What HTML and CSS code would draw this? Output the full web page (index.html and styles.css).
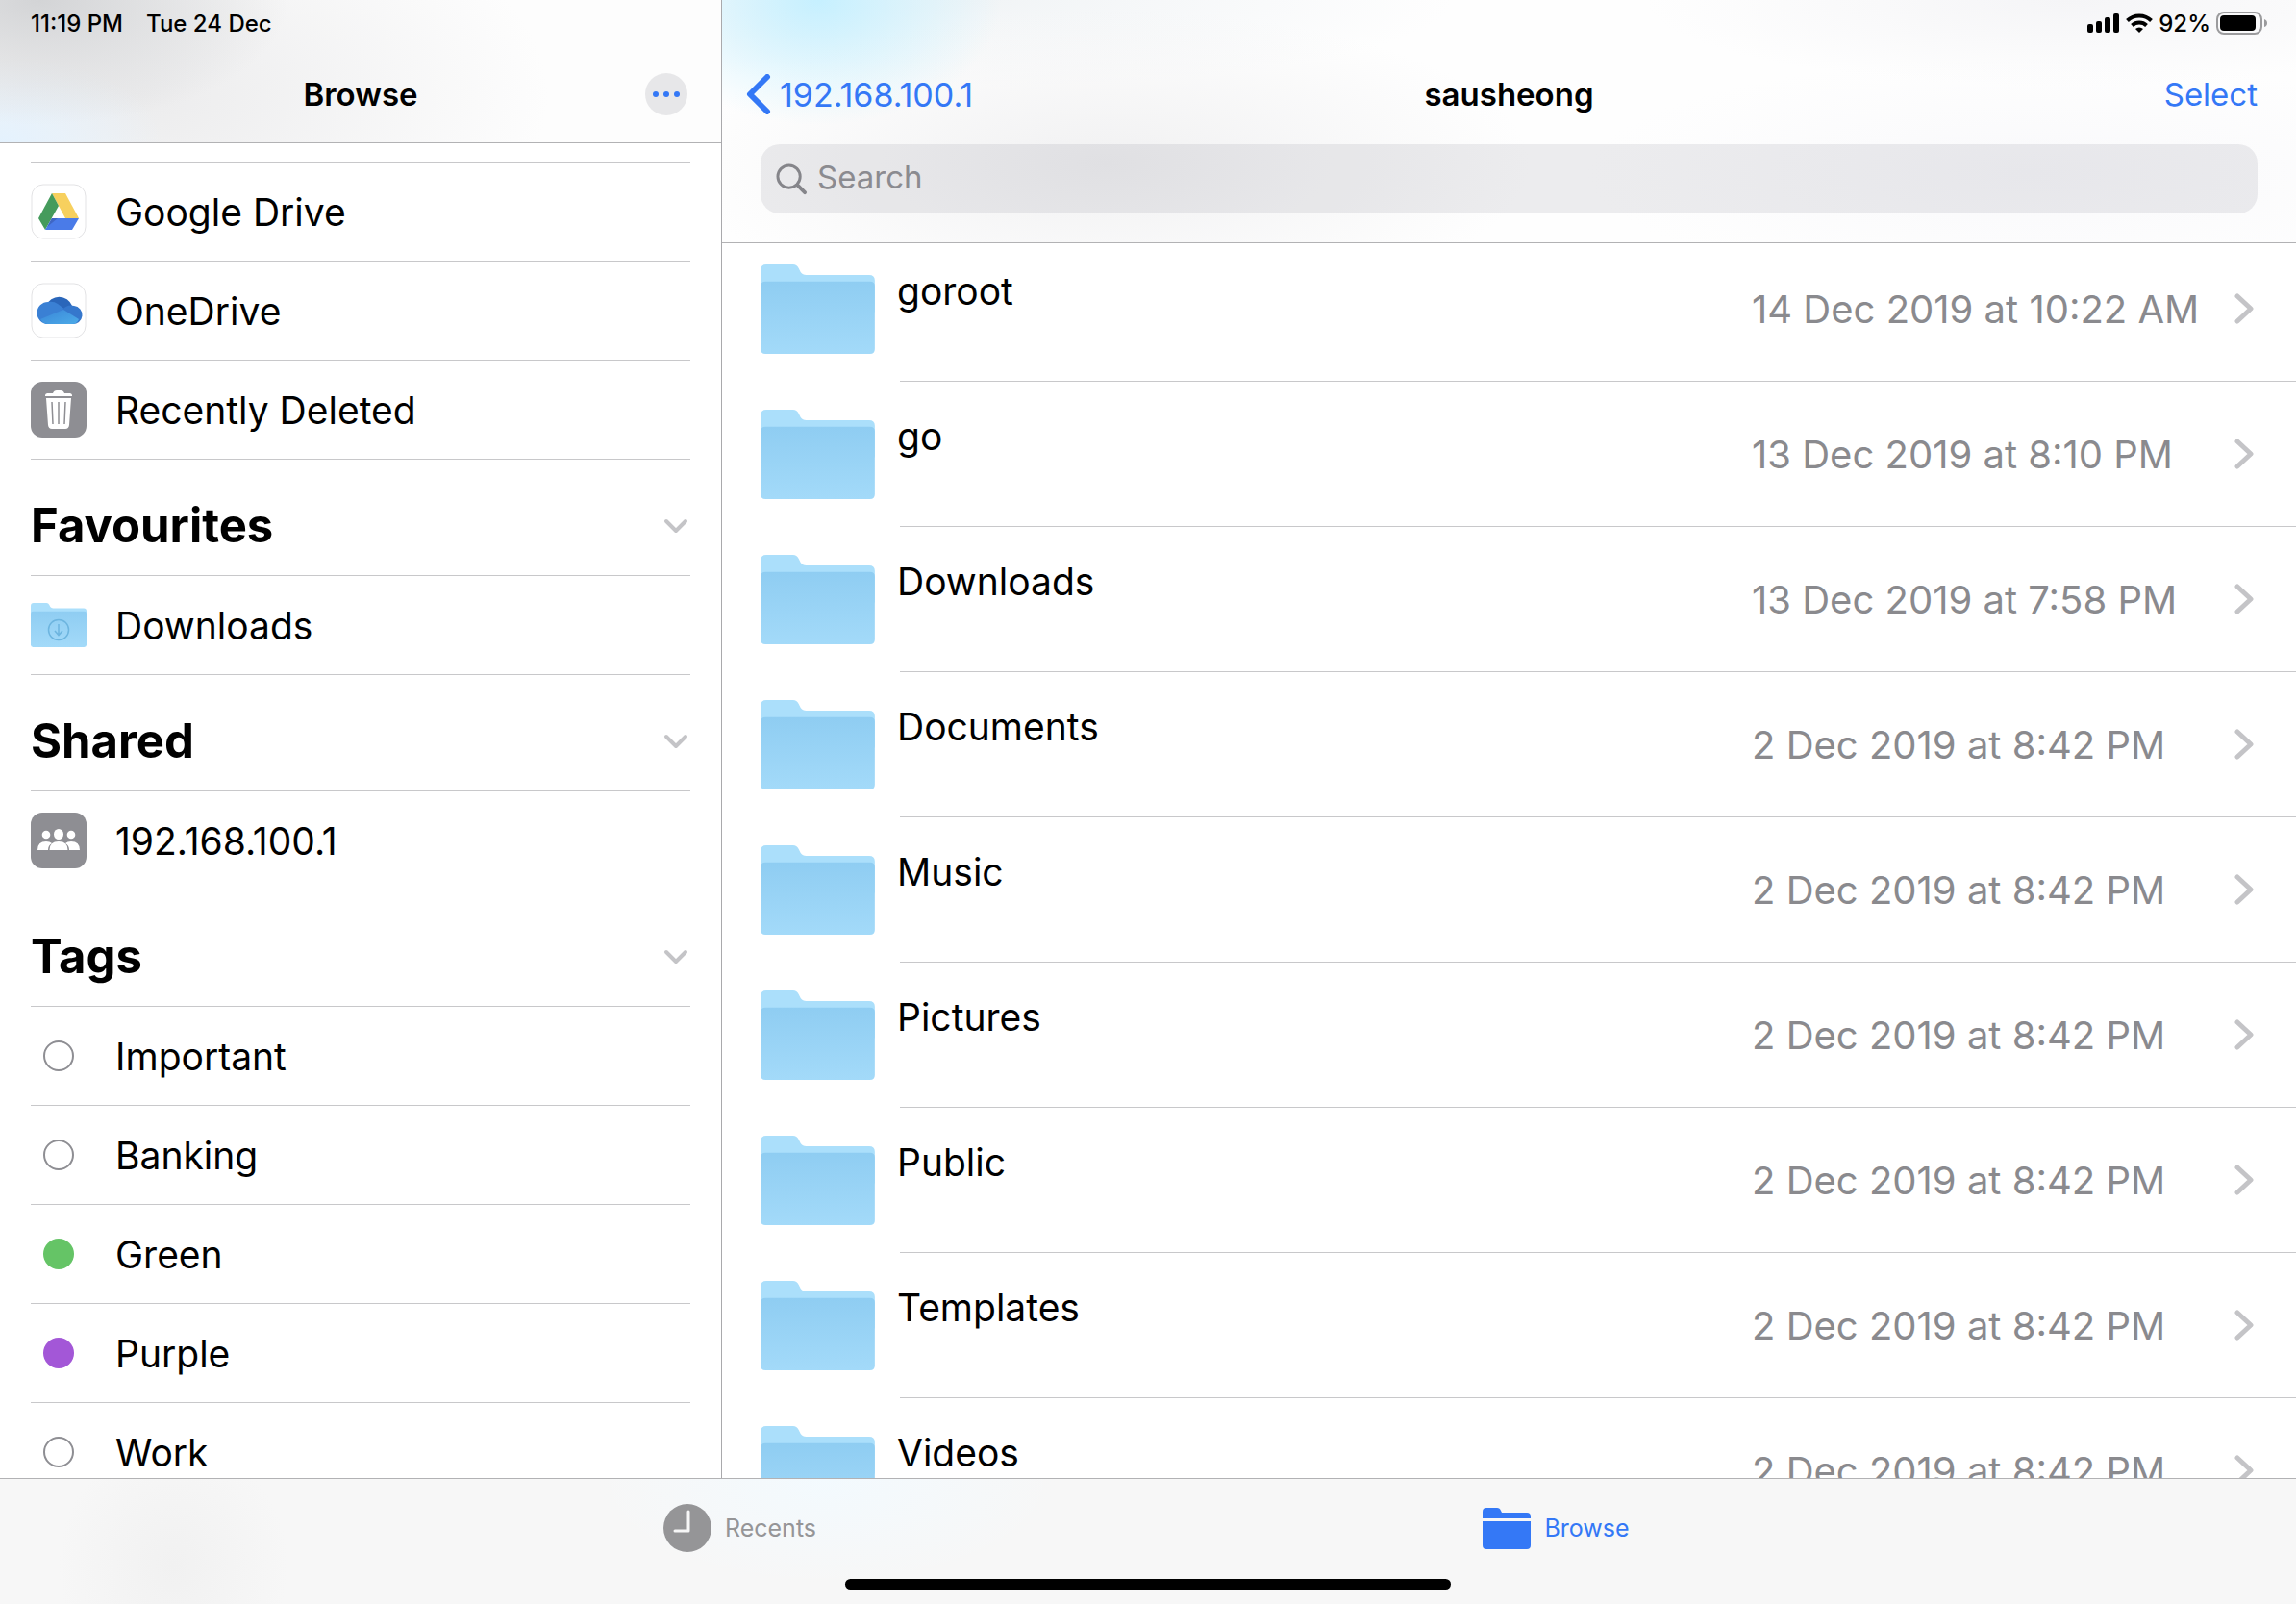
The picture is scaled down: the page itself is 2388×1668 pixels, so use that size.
FILE: index.html
```html
<!DOCTYPE html>
<html lang="en">
<head>
<meta charset="utf-8">
<title>Files</title>
<link rel="stylesheet" href="styles.css">
</head>
<body>
<svg class="defs" aria-hidden="true">
  <defs>
    <linearGradient id="folder-front" x1="0" y1="0" x2="0" y2="1">
      <stop offset="0" stop-color="#8fcdf2"/>
      <stop offset="1" stop-color="#a3daf9"/>
    </linearGradient>
    <linearGradient id="cloud-front" x1="0" y1="0" x2="1" y2="1">
      <stop offset="0" stop-color="#3a86d8"/>
      <stop offset="1" stop-color="#4cabe8"/>
    </linearGradient>
    <symbol id="folder" viewBox="0 0 120 94">
      <path d="M0 6Q0 0 6 0H34Q38 0 40 4L42 8Q44 11 48 11H114Q120 11 120 17V50H0Z" fill="#abdffb"/>
      <path d="M0 23Q0 18 5 18H115Q120 18 120 23V89Q120 94 115 94H5Q0 94 0 89Z" fill="url(#folder-front)"/>
    </symbol>
    <symbol id="chevron" viewBox="0 0 20 32">
      <path d="M3 3L17 16L3 29" fill="none" stroke="#c4c4c7" stroke-width="5" stroke-linecap="round" stroke-linejoin="round"/>
    </symbol>
    <symbol id="disclosure" viewBox="0 0 26 16">
      <path d="M3 3L13 13L23 3" fill="none" stroke="#c4c4c7" stroke-width="4" stroke-linecap="round" stroke-linejoin="round"/>
    </symbol>
  </defs>
</svg>
<div class="app">
  <aside class="sidebar">
    <header class="side-header">
      <div class="status"><span>11:19 PM</span><span>Tue 24 Dec</span></div>
      <div class="nav">
        <h1 class="title">Browse</h1>
        <button class="more" aria-label="More">
          <svg viewBox="0 0 44 44"><g fill="#3478f6"><circle cx="11" cy="22" r="3"/><circle cx="22" cy="22" r="3"/><circle cx="33" cy="22" r="3"/></g></svg>
        </button>
      </div>
    </header>
    <nav class="side-body">
      <ul class="side-list first">
        <li><a href="#" class="row">
          <svg class="icon" viewBox="0 0 58 58"><rect x="1" y="1" width="56" height="56" rx="12" fill="#fff" stroke="#e3e3e5" stroke-width="1"/><path d="M22 10H36L50 36H36Z" fill="#f7d05e"/><path d="M22 10L29 23L15 48L8 36Z" fill="#459b5c"/><path d="M22 36H50L43 48H15Z" fill="#4a7be8"/><path d="M22 36H28L17 45Z" fill="#3f66c4"/></svg>
          Google Drive</a></li>
        <li><a href="#" class="row">
          <svg class="icon" viewBox="0 0 58 58"><rect x="1" y="1" width="56" height="56" rx="12" fill="#fff" stroke="#e3e3e5" stroke-width="1"/><path d="M16 24A14.500 14.500 0 0 1 43 24L40 34L22 34Z" fill="#2a66ba"/><path d="M18 43A11.500 11.500 0 0 1 18 20Q24 19 28 22L40 31L20 43Z" fill="#3a80d4"/><path d="M33 28Q38 22 45 24A9.500 9.500 0 0 1 43 43L28 38Z" fill="#3577cc"/><path d="M10 38L34 28L50 38Q48 43 43 43H18Q13 43 10 38Z" fill="url(#cloud-front)"/></svg>
          OneDrive</a></li>
        <li><a href="#" class="row">
          <svg class="icon" viewBox="0 0 58 58"><rect width="58" height="58" rx="12" fill="#8e8e93"/><path d="M15 14.500Q15 12 17.500 12H23Q24 9 27 9H31Q34 9 35 12H40.500Q43 12 43 14.500V15H15ZM16 17H42L40 45Q39.500 49 36 49H22Q18.500 49 18 45Z" fill="#fff"/><path d="M22 21L23 44M29 21V44M36 21L35 44" stroke="#8e8e93" stroke-width="1.500" fill="none"/></svg>
          Recently Deleted</a></li>
      </ul>
      <h2 class="section"><button>Favourites<svg class="disclosure"><use href="#disclosure"/></svg></button></h2>
      <ul class="side-list">
        <li><a href="#" class="row">
          <svg class="icon" viewBox="0 0 58 58"><svg x="0" y="6" width="58" height="46" viewBox="0 0 120 94" preserveAspectRatio="none"><use href="#folder" width="120" height="94"/></svg><g fill="none" stroke="#6db5df" stroke-width="1.500"><circle cx="29" cy="34" r="10.500"/><path d="M29 28V39M25 35L29 39.500L33 35"/></g></svg>
          Downloads</a></li>
      </ul>
      <h2 class="section"><button>Shared<svg class="disclosure"><use href="#disclosure"/></svg></button></h2>
      <ul class="side-list">
        <li><a href="#" class="row">
          <svg class="icon" viewBox="0 0 58 58"><rect width="58" height="58" rx="12" fill="#8e8e93"/><g fill="#fff"><circle cx="16" cy="23" r="4.300"/><circle cx="42" cy="23" r="4.300"/><path d="M7 39Q7 30 16 30Q20 30 22 32Q18 34 18 39ZM51 39Q51 30 42 30Q38 30 36 32Q40 34 40 39Z"/><ellipse cx="29" cy="22.500" rx="5" ry="5.500"/><path d="M19.500 39Q19.500 30 29 30Q38.500 30 38.500 39Z"/></g></svg>
          192.168.100.1</a></li>
      </ul>
      <h2 class="section"><button>Tags<svg class="disclosure"><use href="#disclosure"/></svg></button></h2>
      <ul class="side-list">
        <li><a href="#" class="row"><span class="tag"></span>Important</a></li>
        <li><a href="#" class="row"><span class="tag"></span>Banking</a></li>
        <li><a href="#" class="row"><span class="tag green"></span>Green</a></li>
        <li><a href="#" class="row"><span class="tag purple"></span>Purple</a></li>
        <li><a href="#" class="row"><span class="tag"></span>Work</a></li>
      </ul>
    </nav>
  </aside>
  <main class="content">
    <header class="main-header">
      <div class="status right">
        <svg class="signal" viewBox="0 0 34 20"><rect x="0" y="11" width="6" height="9" rx="2"/><rect x="9" y="8" width="6" height="12" rx="2"/><rect x="18" y="4" width="6" height="16" rx="2"/><rect x="27" y="0" width="6" height="20" rx="2"/></svg>
        <svg class="wifi" viewBox="0 0 28 20"><g fill="none" stroke="#000" stroke-width="4"><path d="M1.500 7.500A18 18 0 0 1 26.500 7.500"/><path d="M6.500 12.500A11 11 0 0 1 21.500 12.500"/></g><path d="M14 20L10 16A6 6 0 0 1 18 16Z"/></svg>
        <span>92%</span>
        <svg class="battery" viewBox="0 0 53 24"><rect x="1" y="1" width="46" height="22" rx="7" fill="none" stroke="#9b9b9d" stroke-width="2"/><rect x="4" y="4" width="37" height="16" rx="4"/><path d="M50 8Q53 9 53 12Q53 15 50 16Z" fill="#9b9b9d"/></svg>
      </div>
      <div class="nav">
        <a href="#" class="back"><svg viewBox="0 0 26 42"><path d="M22 3L4 21L22 39" fill="none" stroke="#3478f6" stroke-width="6" stroke-linecap="round" stroke-linejoin="round"/></svg>192.168.100.1</a>
        <h1 class="title">sausheong</h1>
        <button class="select">Select</button>
      </div>
      <label class="search">
        <svg viewBox="0 0 34 34"><circle cx="14" cy="14" r="12" fill="none" stroke="#85858a" stroke-width="3"/><path d="M23 23L31 31" stroke="#85858a" stroke-width="4" stroke-linecap="round"/></svg>
        <input type="search" placeholder="Search" aria-label="Search">
      </label>
    </header>
    <ul class="files">
      <li><a href="#" class="file"><svg class="folder"><use href="#folder"/></svg><span class="info"><span class="name">goroot</span><time>14 Dec 2019 at 10:22 AM</time><svg class="chevron"><use href="#chevron"/></svg></span></a></li>
      <li><a href="#" class="file"><svg class="folder"><use href="#folder"/></svg><span class="info"><span class="name">go</span><time>13 Dec 2019 at 8:10 PM</time><svg class="chevron"><use href="#chevron"/></svg></span></a></li>
      <li><a href="#" class="file"><svg class="folder"><use href="#folder"/></svg><span class="info"><span class="name">Downloads</span><time>13 Dec 2019 at 7:58 PM</time><svg class="chevron"><use href="#chevron"/></svg></span></a></li>
      <li><a href="#" class="file"><svg class="folder"><use href="#folder"/></svg><span class="info"><span class="name">Documents</span><time>2 Dec 2019 at 8:42 PM</time><svg class="chevron"><use href="#chevron"/></svg></span></a></li>
      <li><a href="#" class="file"><svg class="folder"><use href="#folder"/></svg><span class="info"><span class="name">Music</span><time>2 Dec 2019 at 8:42 PM</time><svg class="chevron"><use href="#chevron"/></svg></span></a></li>
      <li><a href="#" class="file"><svg class="folder"><use href="#folder"/></svg><span class="info"><span class="name">Pictures</span><time>2 Dec 2019 at 8:42 PM</time><svg class="chevron"><use href="#chevron"/></svg></span></a></li>
      <li><a href="#" class="file"><svg class="folder"><use href="#folder"/></svg><span class="info"><span class="name">Public</span><time>2 Dec 2019 at 8:42 PM</time><svg class="chevron"><use href="#chevron"/></svg></span></a></li>
      <li><a href="#" class="file"><svg class="folder"><use href="#folder"/></svg><span class="info"><span class="name">Templates</span><time>2 Dec 2019 at 8:42 PM</time><svg class="chevron"><use href="#chevron"/></svg></span></a></li>
      <li><a href="#" class="file"><svg class="folder"><use href="#folder"/></svg><span class="info"><span class="name">Videos</span><time>2 Dec 2019 at 8:42 PM</time><svg class="chevron"><use href="#chevron"/></svg></span></a></li>
    </ul>
  </main>
  <footer class="tabbar">
    <nav class="tabs">
      <a href="#" class="tab"><svg class="tab-icon" viewBox="0 0 50 50"><circle cx="25" cy="25" r="25" fill="#959597"/><path d="M26 8V28H12" fill="none" stroke="#f7f7f7" stroke-width="3" stroke-linecap="round" stroke-linejoin="round"/></svg>Recents</a>
      <a href="#" class="tab active"><svg class="tab-icon" viewBox="0 0 50 50"><path d="M0 8Q0 4 4 4H15Q18 4 19 7L20 9H46Q50 9 50 13V15H0ZM0 18H50V43Q50 47 46 47H4Q0 47 0 43Z" fill="#3478f6"/></svg>Browse</a>
    </nav>
    <div class="home"></div>
  </footer>
</div>
</body>
</html>
```

FILE: styles.css
```css
* { box-sizing: border-box; }

body {
  margin: 0;
  font-family: Inter, "Liberation Sans", sans-serif;
  font-size: 39px;
  color: #000;
  background: #fff;
}

h1, h2, ul { margin: 0; padding: 0; }
ul { list-style: none; }
a { color: inherit; text-decoration: none; }
svg { display: block; flex: none; }
button { margin: 0; padding: 0; border: 0; background: none; font: inherit; color: inherit; }

.defs { position: absolute; width: 0; height: 0; }

.app {
  display: grid;
  grid-template-columns: 751px minmax(0, 1fr);
  grid-template-rows: minmax(0, 1fr) auto;
  height: 100vh;
}

.sidebar, .content {
  display: flex;
  flex-direction: column;
  min-height: 0;
  overflow: hidden;
}

.sidebar { border-right: 1px solid #a9a9ac; }

/* Headers */
.side-header, .main-header {
  flex: none;
  border-bottom: 1px solid #b2b2b4;
}

.side-header {
  background:
    radial-gradient(260px 130px at 40px 0, #d3d4d6, transparent),
    radial-gradient(170px 90px at 0 148px, #e4f2fe, transparent),
    radial-gradient(420px 230px at 150px 100px, #ececed, transparent),
    #fdfdfd;
}

.main-header {
  background:
    radial-gradient(190px 130px at 100px 0, #c6f0ff, transparent),
    radial-gradient(440px 160px at 400px 170px, #f1f1f2, transparent),
    radial-gradient(500px 90px at 260px 0, #f1f4f6, transparent),
    radial-gradient(440px 90px at 1400px 0, #f5f5f7, transparent),
    radial-gradient(460px 120px at 1360px 180px, #f9f9fb, transparent),
    #fefefe;
}

.status {
  display: flex;
  align-items: center;
  gap: 24px;
  height: 48px;
  padding: 0 30px 0 32px;
  font-size: 24px;
  font-weight: 500;
}
.status.right { justify-content: flex-end; gap: 6px; }
.signal { width: 34px; height: 20px; }
.wifi { width: 28px; height: 20px; }
.battery { width: 53px; height: 24px; }

.nav {
  display: grid;
  grid-template-columns: 1fr auto 1fr;
  align-items: center;
  height: 100px;
}
.title { grid-column: 2; font-size: 33px; font-weight: 600; }
.more {
  justify-self: end;
  width: 44px;
  height: 44px;
  margin-right: 35px;
  border-radius: 50%;
  background: #e7e7e9;
}
.back, .select { color: #3478f6; font-size: 34px; }
.back { display: flex; align-items: center; gap: 9px; margin-left: 25px; }
.back svg { width: 26px; height: 42px; }
.select { justify-self: end; margin-right: 40px; font-size: 33px; }

.search {
  display: flex;
  align-items: center;
  gap: 10px;
  height: 72px;
  margin: 2px 40px 30px;
  padding: 0 16px;
  border-radius: 20px;
  background: rgba(118, 118, 128, 0.13);
}
.search svg { width: 33px; height: 33px; }
.search input {
  flex: 1;
  min-width: 0;
  padding: 0 0 4px;
  border: 0;
  outline: 0;
  background: none;
  font: inherit;
  font-size: 33px;
}
.search input::placeholder { color: #8b8b90; opacity: 1; }

/* Sidebar lists */
.side-body { padding: 0 32px; }
.side-list.first { margin-top: 19px; border-top: 1px solid #c8c8ca; }
.side-list li { border-bottom: 1px solid #c8c8ca; }
.row {
  display: flex;
  align-items: center;
  gap: 30px;
  height: 102px;
}
.icon { width: 58px; height: 58px; }
.section { border-bottom: 1px solid #c8c8ca; font-size: 49px; font-weight: 700; }
.section button {
  display: flex;
  align-items: center;
  justify-content: space-between;
  width: 100%;
  height: 120px;
  padding: 17px 2px 0 0;
}
.disclosure { width: 26px; height: 16px; }
.tag {
  width: 32px;
  height: 32px;
  margin: 0 13px;
  border: 2px solid #8e8e93;
  border-radius: 50%;
}
.tag.green { border: 0; background: #65c466; }
.tag.purple { border: 0; background: #a357d7; }

/* File list, scrolled slightly under the header */
.files { margin-top: -7px; }
.file { display: flex; gap: 26px; height: 151px; padding-left: 40px; }
.folder { width: 119px; height: 93px; margin-top: 29px; }
.info {
  flex: 1;
  display: grid;
  grid-template-columns: minmax(0, 1fr) 502px 20px;
  align-items: center;
  padding-right: 44px;
  border-bottom: 1px solid #c8c8ca;
}
.name { margin-left: -3px; padding-bottom: 37px; }
.info time { font-size: 40px; color: #8a8a8e; }
.chevron { width: 20px; height: 32px; }

/* Tab bar */
.tabbar {
  grid-column: 1 / -1;
  border-top: 1px solid #b2b2b4;
  background:
    radial-gradient(240px 110px at 860px 0, #f3fafe, transparent),
    radial-gradient(120px 130px at 180px 90px, #f1f1f1, transparent),
    #f7f7f7;
}
.tabs { display: flex; justify-content: center; height: 102px; }
.tab {
  flex: 0 1 849px;
  display: flex;
  align-items: center;
  justify-content: center;
  gap: 14px;
  font-size: 25px;
  color: #959597;
}
.tab.active { color: #3478f6; }
.tab-icon { width: 50px; height: 50px; }
.home {
  width: 630px;
  height: 11px;
  margin: 2px auto 15px;
  border-radius: 6px;
  background: #000;
}
```
